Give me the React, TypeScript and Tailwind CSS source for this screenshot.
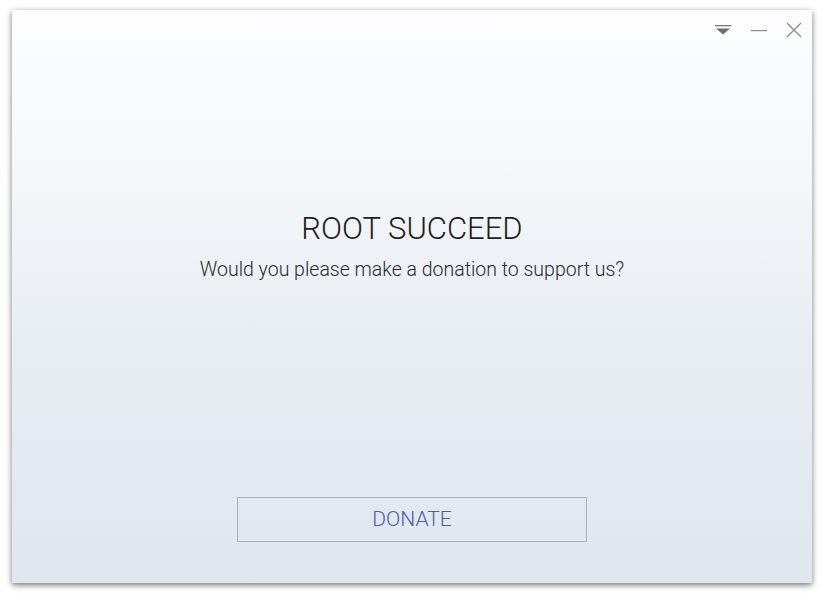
import React from "react";

export default function App() {
  return (
    <div className="w-[822px] h-[596px] bg-white relative overflow-hidden" style={{ fontFamily: "Roboto, 'Liberation Sans', sans-serif" }}>
      <div className="absolute left-[12px] top-[10px] w-[800px] h-[573px] bg-[linear-gradient(to_bottom,#fdfdfe_0%,#f6f8fa_25%,#e9eef4_55%,#e0e6ee_100%)] shadow-[0_2px_6px_rgba(0,0,0,0.55)] flex flex-col">
        <div className="h-[40px] flex items-center justify-end pr-[10px] gap-[18px]">
          <svg width="18" height="12" viewBox="0 0 18 12">
            <rect x="1" y="1" width="16" height="1.3" fill="#7a7a7a" />
            <path d="M2 4.5 L16 4.5 L9 10.5 Z" fill="#6f6f6f" />
          </svg>
          <svg width="18" height="12" viewBox="0 0 18 12">
            <rect x="1" y="6" width="16" height="1.2" fill="#8a8a8a" />
          </svg>
          <svg width="16" height="16" viewBox="0 0 16 16">
            <path d="M1 1 L15 15 M15 1 L1 15" stroke="#8a8a8a" strokeWidth="1.3" />
          </svg>
        </div>
        <div className="flex flex-col items-center mt-[161px]">
          <div className="text-[31px] leading-[36px] font-light text-[#1e1e1e]">ROOT SUCCEED</div>
          <div className="text-[19.5px] leading-[26px] font-light text-[#2a2a2a] mt-[10px]">Would you please make a donation to support us?</div>
        </div>
        <div className="flex-1" />
        <div className="flex justify-center mb-[41px]">
          <button className="w-[350px] h-[45px] border border-[#aab0b8] text-[21px] font-light text-[#4760a8] flex items-center justify-center">
            DONATE
          </button>
        </div>
      </div>
    </div>
  );
}
